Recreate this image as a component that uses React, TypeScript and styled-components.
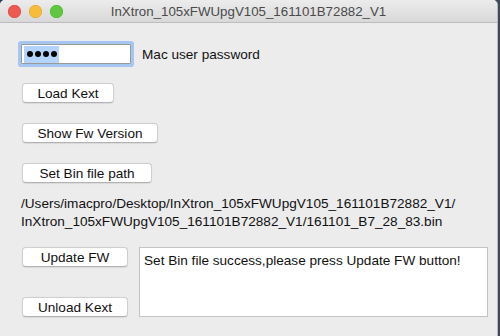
import React from "react";
import styled, { createGlobalStyle } from "styled-components";

const Global = createGlobalStyle`
  html, body { margin: 0; padding: 0; }
  body {
    width: 500px;
    height: 336px;
    overflow: hidden;
    background: #3b4a5e;
    font-family: "Liberation Sans", Arial, sans-serif;
  }
`;

const Screen = styled.div`
  display: flex;
  width: 500px;
  height: 336px;
  background: linear-gradient(90deg, #2d3b55 0%, #3b4a5e 100%);
`;

const Window = styled.div`
  width: 497px;
  height: 345px;
  background: #ececec;
  border-right: 1px solid #b9b9b9;
  border-radius: 5px 5px 0 0;
  display: flex;
  flex-direction: column;
  overflow: hidden;
`;

const TitleBar = styled.div`
  height: 22px;
  flex: none;
  display: flex;
  align-items: center;
  position: relative;
  background: linear-gradient(180deg, #ececec 0%, #d8d8d8 100%);
  border-bottom: 1px solid #bcbcbc;
`;

const Lights = styled.div`
  display: flex;
  gap: 8px;
  padding-left: 8px;
`;

const Light = styled.span<{ $c: string; $b: string }>`
  width: 13px;
  height: 13px;
  border-radius: 50%;
  background: ${(p) => p.$c};
  box-shadow: inset 0 0 0 0.5px ${(p) => p.$b};
`;

const Title = styled.div`
  position: absolute;
  left: 0;
  right: 0;
  text-align: center;
  font-size: 13.3px;
  color: #4a4a4a;
  pointer-events: none;
`;

const Content = styled.div`
  flex: 1;
  display: flex;
  flex-direction: column;
  align-items: flex-start;
  padding: 21px 0 0 21px;
  font-size: 13.6px;
  color: #111;
`;

const PasswordRow = styled.div`
  display: flex;
  align-items: center;
  gap: 11px;
`;

const Field = styled.div`
  width: 106px;
  height: 18px;
  background: #fff;
  border: 1px solid #9a9a9a;
  box-shadow: 0 0 0 3px #a6c6f2;
  border-radius: 1px;
  display: flex;
  align-items: center;
  padding-left: 2px;
  box-sizing: content-box;
`;

const Selected = styled.span`
  background: #b4d3fb;
  height: 17px;
  display: flex;
  align-items: center;
  gap: 2px;
  padding: 0 2px 0 3px;
`;

const Dot = styled.span`
  width: 6px;
  height: 6px;
  border-radius: 50%;
  background: #000;
`;

const Label = styled.span`
  font-size: 13.6px;
  color: #111;
`;

const Button = styled.button<{ $w: number; $mt: number }>`
  width: ${(p) => p.$w}px;
  height: 20px;
  margin-top: ${(p) => p.$mt}px;
  margin-left: 1px;
  padding: 0;
  background: #ffffff;
  border: 1px solid #cfcfcf;
  border-bottom-color: #b3b3b3;
  border-radius: 4px;
  box-shadow: 0 0.5px 1px rgba(0, 0, 0, 0.08);
  font-family: "Liberation Sans", Arial, sans-serif;
  font-size: 13.6px;
  color: #111;
  display: flex;
  align-items: center;
  justify-content: center;
`;

const PathText = styled.div`
  margin-top: 12px;
  font-size: 13.6px;
  line-height: 18px;
  color: #111;
`;

const BottomRow = styled.div`
  margin-top: 16px;
  display: flex;
  gap: 11px;
`;

const ButtonColumn = styled.div`
  display: flex;
  flex-direction: column;
  justify-content: space-between;
  height: 70px;
`;

const LogBox = styled.div`
  width: 349px;
  height: 70px;
  background: #fff;
  border: 1px solid #c4c4c4;
  padding: 4px 4px;
  box-sizing: border-box;
  font-size: 13.6px;
  line-height: 18px;
  color: #111;
`;

export default function App() {
  return (
    <>
      <Global />
      <Screen>
        <Window>
          <TitleBar>
            <Lights>
              <Light $c="#ee5a52" $b="#d9443d" />
              <Light $c="#f6bd3b" $b="#dea22a" />
              <Light $c="#5fc83f" $b="#4aae2f" />
            </Lights>
            <Title>InXtron_105xFWUpgV105_161101B72882_V1</Title>
          </TitleBar>
          <Content>
            <PasswordRow>
              <Field>
                <Selected aria-label="password">
                  <Dot />
                  <Dot />
                  <Dot />
                  <Dot />
                </Selected>
              </Field>
              <Label>Mac user password</Label>
            </PasswordRow>
            <Button $w={92} $mt={19}>Load Kext</Button>
            <Button $w={136} $mt={20}>Show Fw Version</Button>
            <Button $w={130} $mt={20}>Set Bin file path</Button>
            <PathText>
              /Users/imacpro/Desktop/InXtron_105xFWUpgV105_161101B72882_V1/
              <br />
              InXtron_105xFWUpgV105_161101B72882_V1/161101_B7_28_83.bin
            </PathText>
            <BottomRow>
              <ButtonColumn>
                <Button $w={106} $mt={0}>Update FW</Button>
                <Button $w={106} $mt={0}>Unload Kext</Button>
              </ButtonColumn>
              <LogBox>Set Bin file success,please press Update FW button!</LogBox>
            </BottomRow>
          </Content>
        </Window>
      </Screen>
    </>
  );
}
